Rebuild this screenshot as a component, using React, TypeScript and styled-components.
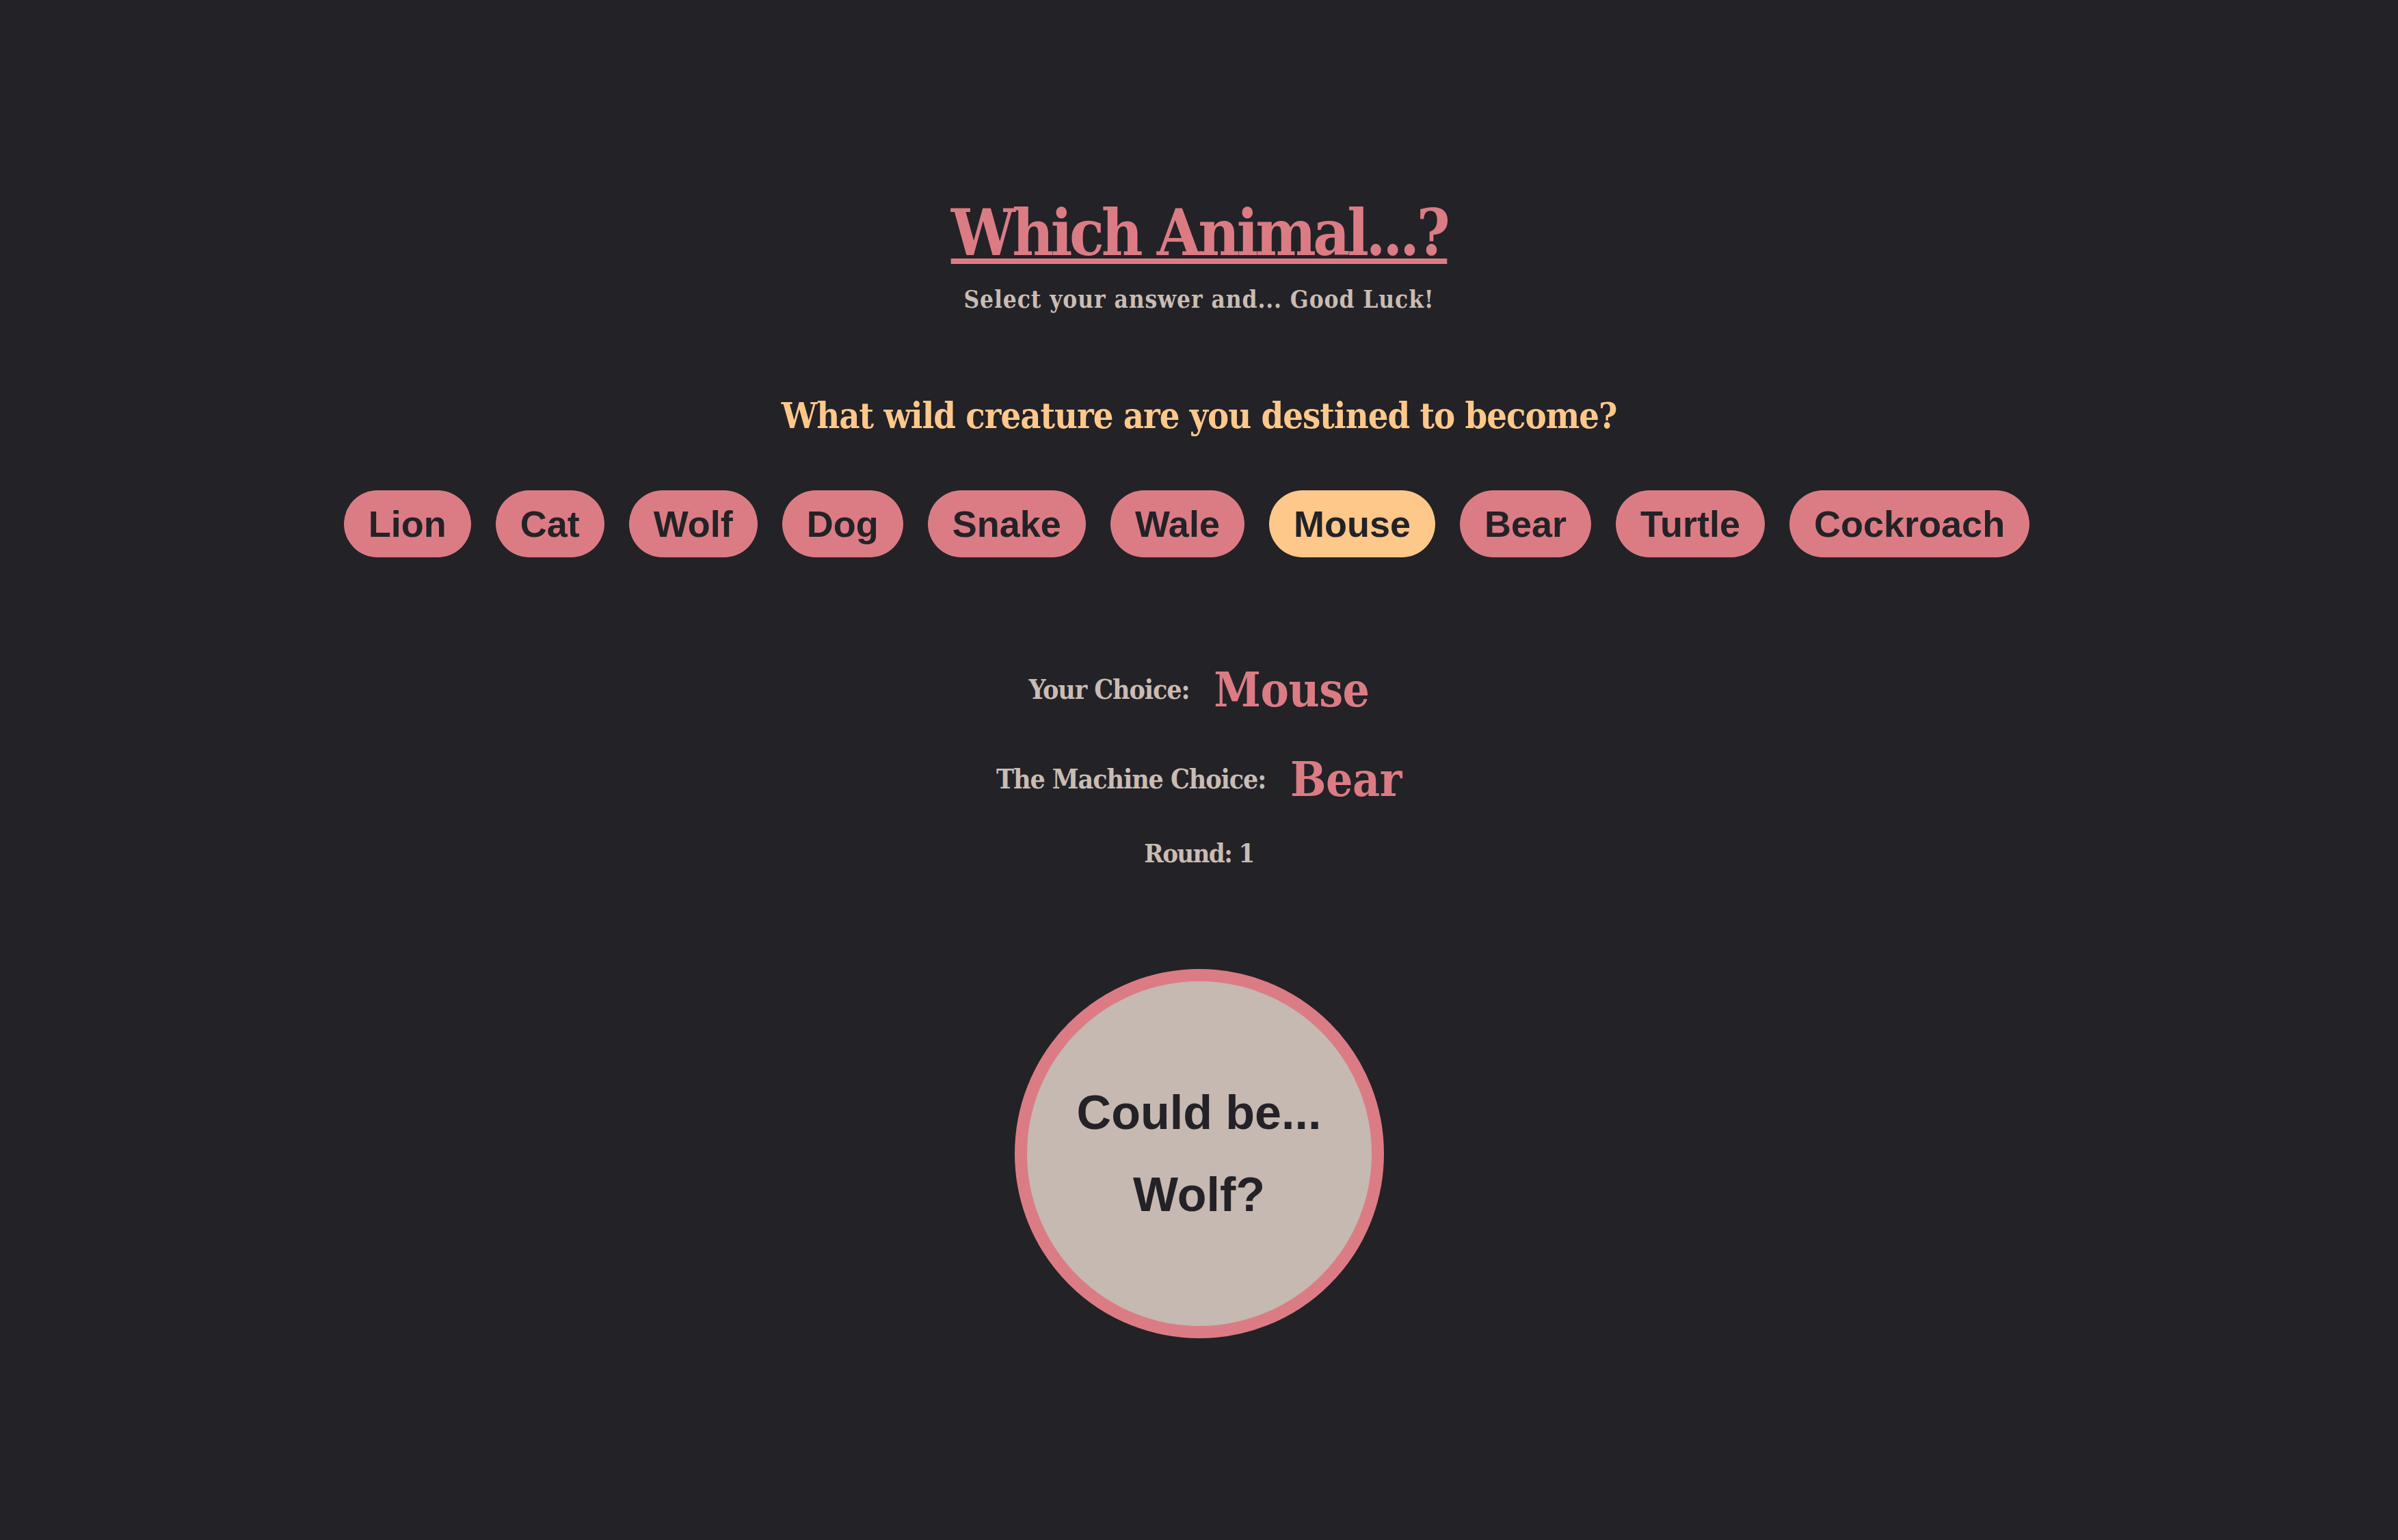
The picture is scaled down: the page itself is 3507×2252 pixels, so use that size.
import React from "react";
import styled, { createGlobalStyle } from "styled-components";

const GlobalStyle = createGlobalStyle`
  html, body {
    margin: 0;
    padding: 0;
    background: #232227;
  }
  #root {
    min-height: 100vh;
  }
`;

const slab = `"DejaVu Serif Condensed", "DejaVu Serif", "Liberation Serif", serif`;
const sans = `"Liberation Sans", Arial, sans-serif`;

const Page = styled.main`
  min-height: 2252px;
  box-sizing: border-box;
  padding-top: 294px;
  display: flex;
  flex-direction: column;
  align-items: center;
  background: #232227;
`;

const Title = styled.h1`
  margin: 0;
  font-family: ${slab};
  font-stretch: condensed;
  font-weight: 700;
  font-size: 93px;
  letter-spacing: -4.4px;
  line-height: 1;
  color: #db7c84;
  text-decoration: underline;
  text-decoration-thickness: 8px;
  text-underline-offset: 5px;
`;

const Subtitle = styled.p`
  margin: 33px 0 0;
  font-family: ${slab};
  font-stretch: condensed;
  font-weight: 700;
  font-size: 35px;
  letter-spacing: 0.9px;
  line-height: 1;
  color: #c9bcb3;
`;

const Question = styled.h2`
  margin: 127px 0 0;
  font-family: ${slab};
  font-stretch: condensed;
  font-weight: 700;
  font-size: 52px;
  letter-spacing: -1px;
  line-height: 1;
  color: #ffc88b;
`;

const Options = styled.div`
  margin-top: 83px;
  display: flex;
  flex-wrap: wrap;
  justify-content: center;
`;

const Option = styled.button<{ $selected?: boolean }>`
  margin: 0 36px 0 0;
  padding: 22px 36px;
  border: none;
  border-radius: 999px;
  background: ${(p) => (p.$selected ? "#ffc88b" : "#db7c84")};
  color: #232227;
  font-family: ${sans};
  font-weight: 700;
  font-size: 54px;
  line-height: 54px;
  cursor: pointer;
`;

const ChoiceRow = styled.div<{ $gap: number }>`
  margin-top: ${(p) => p.$gap}px;
  display: flex;
  align-items: center;
  gap: 36px;
`;

const Label = styled.span`
  font-family: ${slab};
  font-stretch: condensed;
  font-weight: 700;
  font-size: 39px;
  letter-spacing: -1.1px;
  line-height: 1;
  color: #c9bcb3;
`;

const Value = styled.span`
  font-family: ${slab};
  font-stretch: condensed;
  font-weight: 700;
  font-size: 69px;
  letter-spacing: -0.5px;
  line-height: 1;
  color: #db7c84;
`;

const Round = styled.p`
  margin: 55px 0 0;
  font-family: ${slab};
  font-stretch: condensed;
  font-weight: 700;
  font-size: 38px;
  letter-spacing: -1.6px;
  line-height: 1;
  color: #c9bcb3;
`;

const Circle = styled.div`
  margin-top: 150px;
  width: 540px;
  height: 540px;
  box-sizing: border-box;
  border: 18px solid #db7c84;
  border-radius: 50%;
  background: #c5b9b1;
  display: flex;
  flex-direction: column;
  align-items: center;
  justify-content: center;
`;

const GuessLine = styled.span`
  display: block;
  font-family: ${sans};
  font-weight: 700;
  font-size: 70px;
  line-height: 120px;
  color: #232227;
  text-align: center;
`;

const animals = [
  "Lion",
  "Cat",
  "Wolf",
  "Dog",
  "Snake",
  "Wale",
  "Mouse",
  "Bear",
  "Turtle",
  "Cockroach",
];

export default function App() {
  const selected = "Mouse";
  return (
    <>
      <GlobalStyle />
      <Page>
        <Title>Which Animal...?</Title>
        <Subtitle>Select your answer and... Good Luck!</Subtitle>
        <Question>What wild creature are you destined to become?</Question>
        <Options>
          {animals.map((a) => (
            <Option key={a} $selected={a === selected}>
              {a}
            </Option>
          ))}
        </Options>
        <ChoiceRow $gap={159}>
          <Label>Your Choice:</Label>
          <Value>Mouse</Value>
        </ChoiceRow>
        <ChoiceRow $gap={62}>
          <Label>The Machine Choice:</Label>
          <Value>Bear</Value>
        </ChoiceRow>
        <Round>Round: 1</Round>
        <Circle>
          <GuessLine>Could be...</GuessLine>
          <GuessLine>Wolf?</GuessLine>
        </Circle>
      </Page>
    </>
  );
}
